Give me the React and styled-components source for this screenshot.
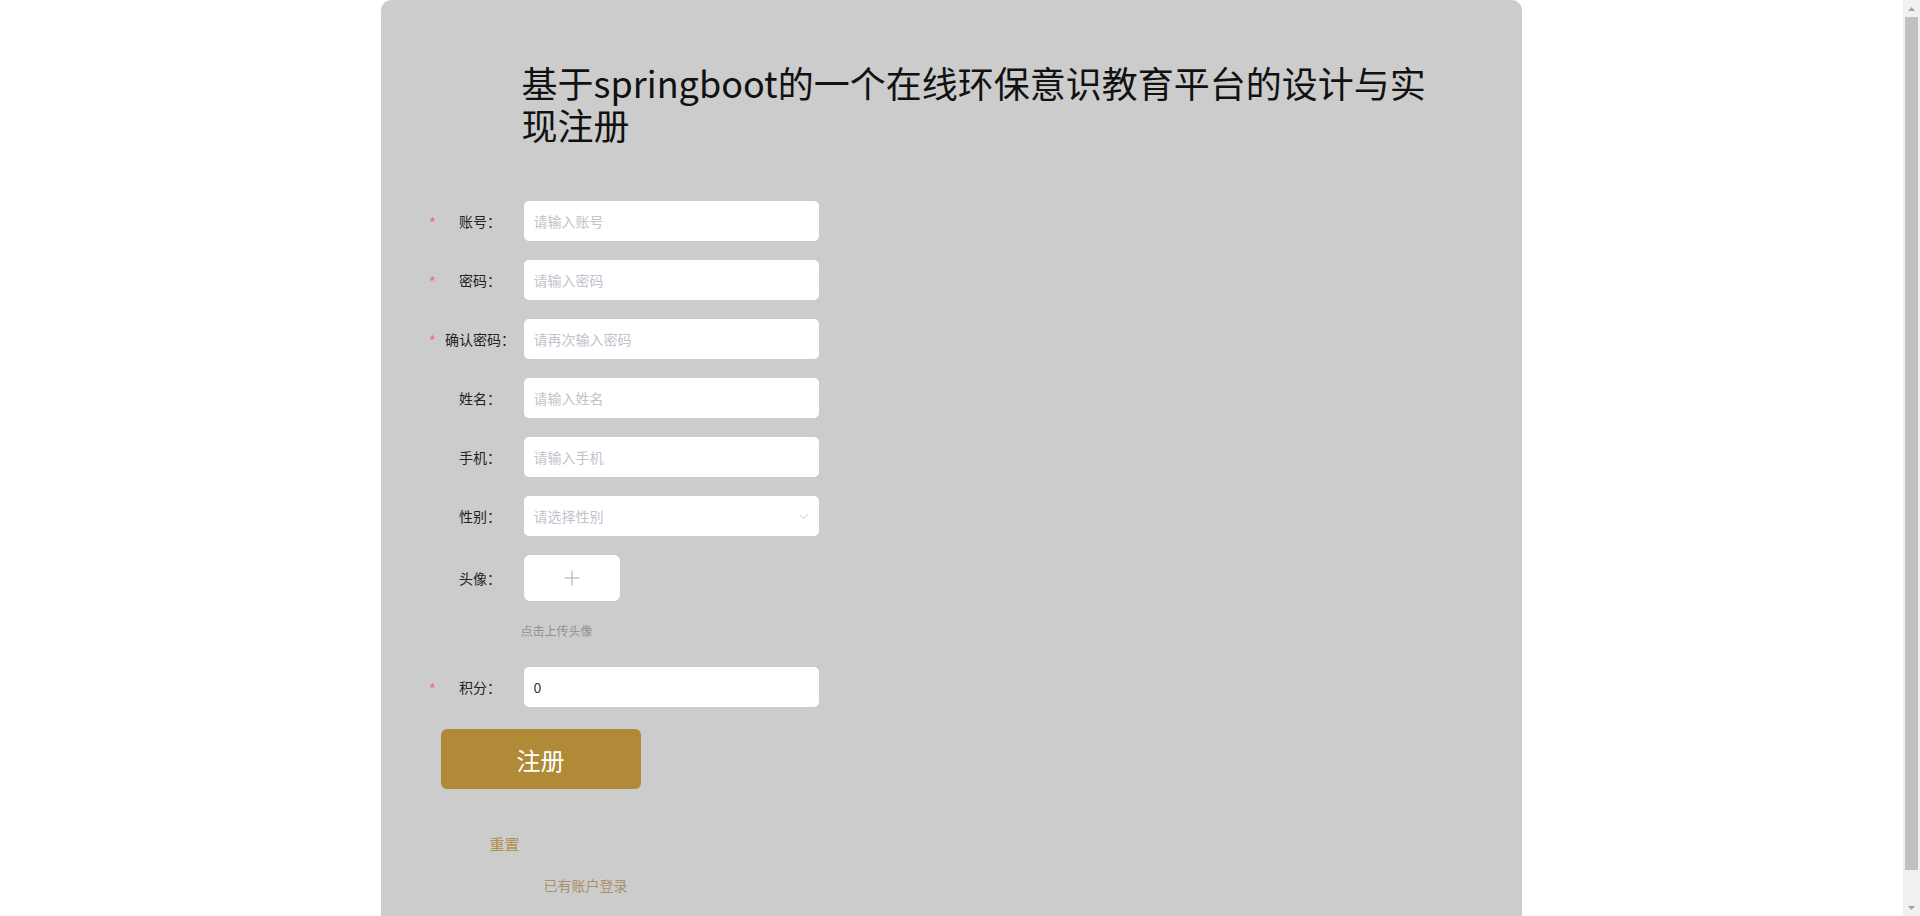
import React from 'react';
import styled, { createGlobalStyle } from 'styled-components';
import { ChevronDown, Plus } from 'lucide-react';

const GlobalStyle = createGlobalStyle`
  html, body {
    margin: 0;
    padding: 0;
    background: #ffffff;
  }
  body {
    font-family: "Noto Sans CJK SC", "Microsoft YaHei", "Noto Sans", sans-serif;
    color: #333;
  }
  * {
    box-sizing: border-box;
  }
`;

const Viewport = styled.div`
  display: flex;
  height: 100vh;
  overflow: hidden;
`;

const Main = styled.main`
  flex: 1;
  min-width: 0;
  overflow: hidden;
`;

const ScrollTrack = styled.div`
  width: 17px;
  flex-shrink: 0;
  background: #f1f1f1;
  display: flex;
  flex-direction: column;
`;

const ScrollArrow = styled.div`
  height: 17px;
  display: flex;
  align-items: center;
  justify-content: center;
`;

const ScrollThumb = styled.div`
  height: 853px;
  margin: 0 2px;
  background: #c1c1c1;
`;

const ScrollRest = styled.div`
  flex: 1;
`;

const Panel = styled.div`
  width: 60%;
  margin: 0 auto;
  background: #cccccc;
  border-radius: 10px 10px 0 0;
  padding: 61px 0 49px 0;
`;

const Title = styled.h1`
  margin: 0 0 56px 141px;
  font-size: 36px;
  line-height: 42px;
  font-weight: 400;
  color: #111;
`;

const Form = styled.form`
  display: flex;
  flex-direction: column;
`;

const FormItem = styled.div`
  display: flex;
  align-items: center;
  padding-left: 48px;
  margin-bottom: ${(p) => p.$mb ?? 19}px;
`;

const Star = styled.span`
  width: 8px;
  margin-top: 4px;
  font-size: 15px;
  line-height: 14px;
  color: #f56c6c;
  text-align: center;
`;

const Label = styled.label`
  width: 87px;
  font-size: 14px;
  text-align: center;
  color: #222;
  white-space: nowrap;
`;

const TextInput = styled.input`
  width: 295px;
  height: 40px;
  border: none;
  outline: none;
  border-radius: 5px;
  background: #fff;
  padding: 0 10px;
  font-family: inherit;
  font-size: 14px;
  color: #333;

  &::placeholder {
    color: #c0c4cc;
  }
`;

const Select = styled.div`
  width: 295px;
  height: 40px;
  border-radius: 5px;
  background: #fff;
  padding: 0 8px 0 10px;
  display: flex;
  align-items: center;
  justify-content: space-between;
  font-size: 14px;
  color: #c0c4cc;
  cursor: pointer;
`;

const Upload = styled.div`
  width: 96px;
  height: 46px;
  border-radius: 6px;
  background: #fff;
  display: flex;
  align-items: center;
  justify-content: center;
  cursor: pointer;
`;

const Tip = styled.div`
  margin: 20px 0 26px 140px;
  font-size: 12px;
  line-height: 20px;
  color: #8f9196;
`;

const SubmitButton = styled.button`
  width: 200px;
  height: 60px;
  margin: 3px 0 0 60px;
  border: none;
  border-radius: 6px;
  background: #b08a36;
  color: #fff;
  font-family: inherit;
  font-size: 24px;
  cursor: pointer;
`;

const TextLink = styled.div`
  margin-left: ${(p) => p.$left}px;
  margin-top: ${(p) => p.$top}px;
  font-size: ${(p) => p.$size}px;
  line-height: 20px;
  color: ${(p) => p.$color};
  cursor: pointer;
  align-self: flex-start;
`;

const fields = [
  { label: '账号：', placeholder: '请输入账号', required: true },
  { label: '密码：', placeholder: '请输入密码', required: true, type: 'password' },
  { label: '确认密码：', placeholder: '请再次输入密码', required: true, type: 'password' },
  { label: '姓名：', placeholder: '请输入姓名' },
  { label: '手机：', placeholder: '请输入手机' },
];

const Arrow = ({ up }) => (
  <svg width="7" height="4" viewBox="0 0 7 4">
    <path d={up ? 'M0 4 L3.5 0 L7 4 Z' : 'M0 0 L3.5 4 L7 0 Z'} fill="#a3a3a3" />
  </svg>
);

export default function App() {
  return (
    <>
      <GlobalStyle />
      <Viewport>
        <Main>
          <Panel>
            <Title>
              基于springboot的一个在线环保意识教育平台的设计与实
              <br />
              现注册
            </Title>
            <Form onSubmit={(e) => e.preventDefault()}>
              {fields.map((f) => (
                <FormItem key={f.label}>
                  <Star>{f.required ? '*' : ''}</Star>
                  <Label>{f.label}</Label>
                  <TextInput type={f.type || 'text'} placeholder={f.placeholder} />
                </FormItem>
              ))}
              <FormItem>
                <Star />
                <Label>性别：</Label>
                <Select>
                  <span>请选择性别</span>
                  <ChevronDown size={15} strokeWidth={1.4} color="#c0c4cc" />
                </Select>
              </FormItem>
              <FormItem $mb={0}>
                <Star />
                <Label>头像：</Label>
                <Upload>
                  <Plus size={24} strokeWidth={1.1} color="#a9adb4" />
                </Upload>
              </FormItem>
              <Tip>点击上传头像</Tip>
              <FormItem $mb={19}>
                <Star>*</Star>
                <Label>积分：</Label>
                <TextInput defaultValue="0" />
              </FormItem>
              <SubmitButton type="submit">注册</SubmitButton>
              <TextLink $left={109} $top={45} $size={15} $color="#b0924c">重置</TextLink>
              <TextLink $left={163} $top={21} $size={14} $color="#a8916a">已有账户登录</TextLink>
            </Form>
          </Panel>
        </Main>
        <ScrollTrack>
          <ScrollArrow><Arrow up /></ScrollArrow>
          <ScrollThumb />
          <ScrollRest />
          <ScrollArrow><Arrow /></ScrollArrow>
        </ScrollTrack>
      </Viewport>
    </>
  );
}
